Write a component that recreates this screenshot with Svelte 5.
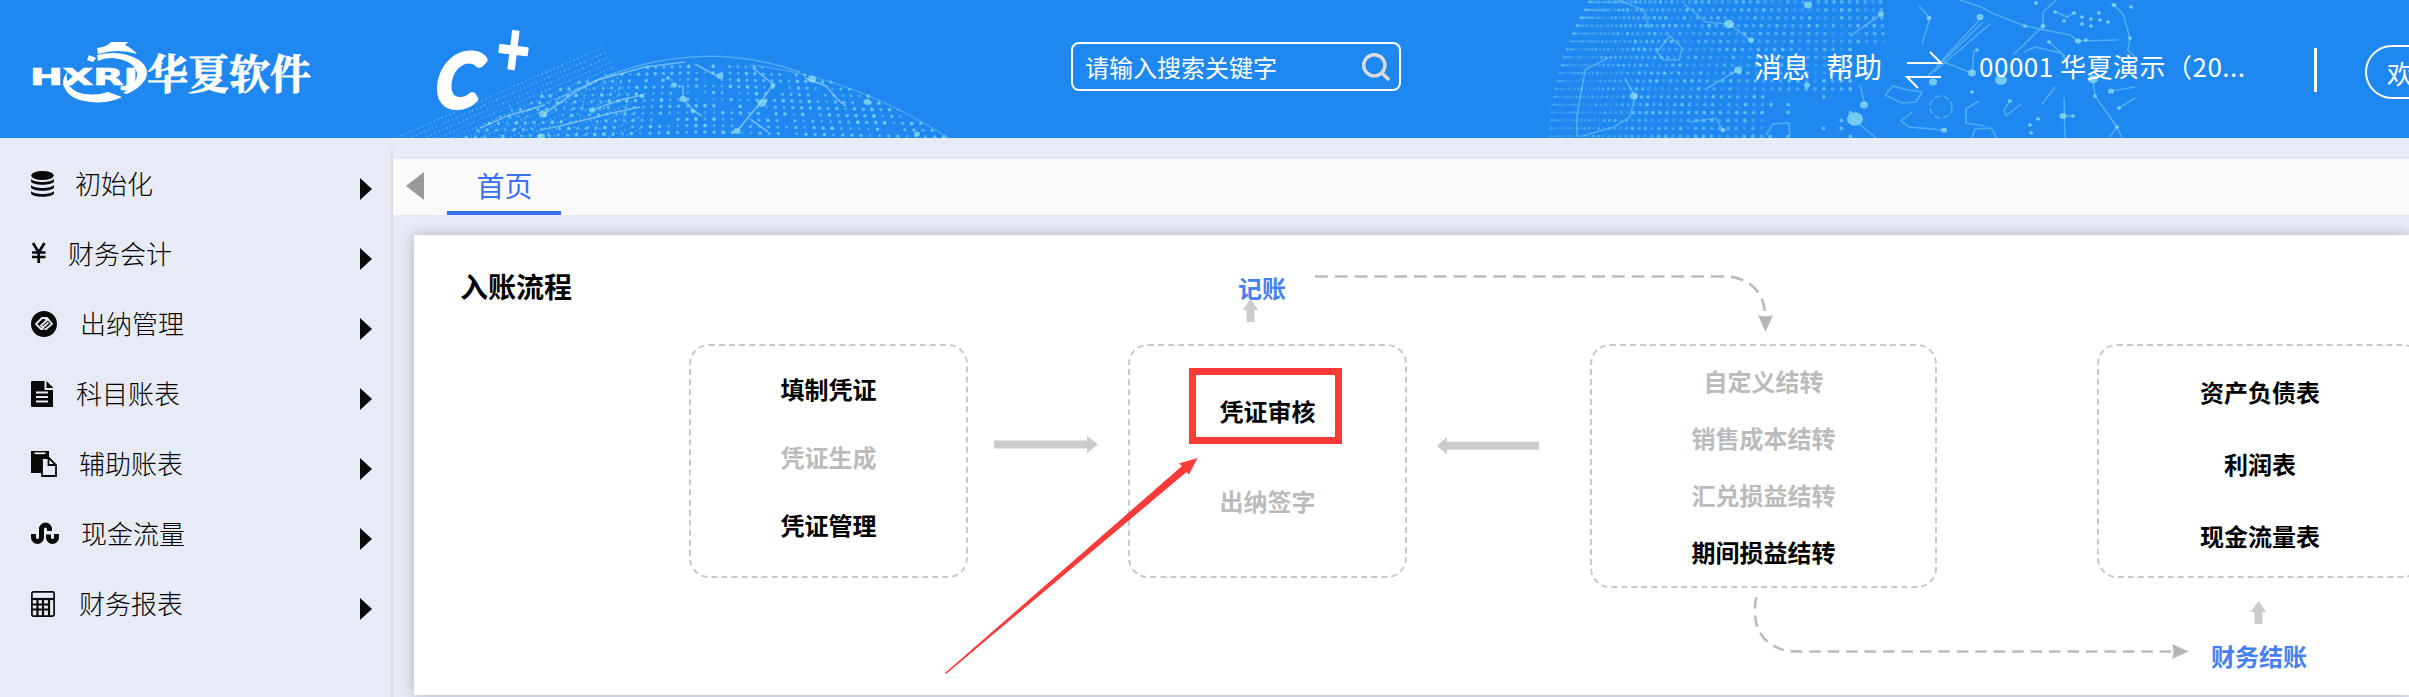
<script lang="ts">
  let keyword = $state("");
  let activeMenu = $state("");

  const menus = [
    { icon: "database", label: "初始化", width: 23, gap: 21 },
    { icon: "yen", label: "财务会计", width: 16, gap: 21 },
    { icon: "cashier", label: "出纳管理", width: 26, gap: 23 },
    { icon: "file", label: "科目账表", width: 23, gap: 22 },
    { icon: "paste", label: "辅助账表", width: 26, gap: 22 },
    { icon: "flow", label: "现金流量", width: 28, gap: 22 },
    { icon: "calc", label: "财务报表", width: 24, gap: 24 },
  ];

  // positions are relative to the flow panel
  const groups = [
    {
      x: 275, y: 109, w: 279, h: 234, pad: 9, line: 68,
      items: [["填制凭证", true], ["凭证生成", false], ["凭证管理", true]],
    },
    {
      x: 714, y: 109, w: 279, h: 234, pad: 20, line: 90,
      items: [["凭证审核", true], ["出纳签字", false]],
    },
    {
      x: 1176, y: 109, w: 347, h: 244, pad: 6, line: 57,
      items: [["自定义结转", false], ["销售成本结转", false], ["汇兑损益结转", false], ["期间损益结转", true]],
    },
    {
      x: 1683, y: 109, w: 326, h: 234, pad: 10, line: 72,
      items: [["资产负债表", true], ["利润表", true], ["现金流量表", true]],
    },
  ];

  function noise(a: number, b: number) {
    const n = Math.sin(a * 12.9898 + b * 78.233) * 43758.5453;
    return n - Math.floor(n);
  }

  type Dot = { x: number; y: number; r: number; o: number };

  function leftGlobe() {
    const dots: Dot[] = [];
    for (let c = -34; c <= 34; c++) {
      for (let row = 0; row < 12; row++) {
        const y = 66 + row * 6.6 + Math.abs(c) * 0.2;
        const x = 705 + c * 8.2 * (1 + row * 0.012);
        const dx = x - 705;
        const dy = y - 486;
        if (dx * dx + dy * dy > 423 * 423 || y > 138) continue;
        const n = noise(c, row);
        if (n < 0.1) continue;
        dots.push({ x, y, r: 1.2 + n * 0.7, o: 0.3 + n * 0.45 });
      }
    }
    // faint outer haze rising to the right
    for (let i = 0; i < 52; i++) {
      for (let j = 0; j < 17; j++) {
        const x = 398 + i * 4 + j * 2.6;
        const y = 137 - i * 1.75 + j * 5;
        if (y > 138 || x > 640 || y < 44) continue;
        dots.push({ x, y, r: 1.2, o: 0.12 + noise(i, j) * 0.25 });
      }
    }
    return dots;
  }

  function rightGlobe() {
    const dots: Dot[] = [];
    for (let row = 0; row < 18; row++) {
      const y = 2 + row * 7.9;
      const R = Math.sqrt(295 * 295 - (y - 150) * (y - 150));
      for (let a = -88; a < 9; a += 1.75) {
        const x = 1844 + R * Math.sin((a * Math.PI) / 180);
        const n = noise(a, row);
        if (x > 1768 && y > 92 && n < 0.9) continue;
        if (x > 1855 && y > 42) continue;
        const edge = Math.min(1, (x - 1548) / 90);
        dots.push({ x, y, r: 1.1 + edge * 0.8, o: (0.16 + n * 0.45) * (0.4 + edge * 0.6) });
      }
    }
    return dots;
  }

  const globeDots = [...leftGlobe(), ...rightGlobe()];

  const leftLinks = [
    "544 114 575 92 598 80 645 67 685 62",
    "695 64 717 76",
    "773 84 761 102 737 131",
    "753 68 773 84",
    "683 85 683 99 694 111 702 116",
    "643 95 620 100 592 110",
    "805 78 826 86 838 100 846 106",
    "540 130 560 126 612 113 640 107",
    "480 128 510 115 545 105",
    "750 119 768 132",
  ];
  const rightLinks = [
    "1684 4 1706 22 1729 24 1751 40",
    "1618 0 1644 10 1649 28",
    "1738 70 1706 89",
    "1625 78 1635 96 1630 117 1614 127 1582 136",
    "1657 52 1670 36 1682 48 1679 60 1664 60 1657 52",
    "1577 137 1577 115 1585 70 1608 58",
    "1766 135 1773 124 1789 123 1790 137",
    "1690 122 1716 118 1723 130",
    "1855 120 1876 138",
    "1860 85 1865 105",
    "1885 95 1893 86 1908 90 1922 92 1916 102 1902 103 1885 95",
    "1912 112 1901 121 1909 127 1943 130",
    "1850 36 1882 14",
    "1919 6 1930 18 1922 44",
    "1937 66 1981 18",
    "1934 72 1990 24",
    "1928 76 1983 22",
    "1974 50 1972 73 1944 62",
    "1960 0 1981 7 1992 13 2025 26 2070 35 2078 41 2118 40",
    "2056 0 2043 12 2043 26 2013 55",
    "2056 12 2067 17 2074 13",
    "2113 4 2123 14 2130 38 2128 50 2136 58",
    "2024 52 2035 47 2061 53 2066 60",
    "2049 42 2065 56",
    "2093 80 2095 96 2117 127 2122 138",
    "2117 127 2110 137",
    "2111 91 2135 87",
    "2119 108 2135 98",
    "2055 87 2042 104",
    "2064 98 2065 138",
    "2063 116 2073 116",
    "2010 101 2004 110 2006 116 2021 104",
    "1979 101 1966 109 1966 123 1985 126",
    "1972 138 1975 129 1991 128 1997 138",
  ];
  const nodes = [
    [1729, 24, 5], [1808, 5, 4], [1634, 96, 4], [1738, 70, 4], [1855, 119, 8], [1864, 105, 4],
    [1751, 40, 3], [1881, 14, 3], [1929, 18, 2.5], [1980, 17, 3.5], [1972, 73, 4], [1933, 82, 4],
    [2001, 80, 6], [2093, 79, 5], [2078, 41, 3], [2111, 91, 3], [2063, 116, 3.5], [2043, 26, 2.5],
    [2114, 5, 2.5], [1944, 130, 3], [1807, 85, 3], [1723, 130, 2.5], [2119, 108, 2], [2086, 40, 2],
    [2025, 26, 2], [2049, 42, 2], [2095, 96, 2], [2117, 127, 2], [2130, 38, 2], [1977, 50, 2],
    [2036, 3, 2], [2055, 12, 2], [2074, 13, 2], [2064, 21, 2], [2082, 17, 2], [2082, 24, 2],
    [2091, 19, 2], [2091, 26, 2], [2099, 13, 2], [2100, 20, 2], [2108, 22, 2], [2131, 7, 2],
    [1972, 92, 2], [2038, 119, 2], [2030, 125, 2], [2031, 133, 2], [2073, 116, 2], [2010, 101, 2],
    [543, 114, 4], [683, 99, 3.5], [720, 76, 3.5], [762, 103, 4.5], [737, 131, 3.5], [773, 85, 2.5],
    [674, 85, 3], [642, 96, 2.5], [592, 110, 3], [812, 79, 4], [867, 102, 3.5], [693, 111, 2.5],
    [541, 137, 4], [917, 134, 3], [668, 78, 2],
  ];
</script>

{#snippet menuIcon(name: string)}
  {#if name === "database"}
    <svg class="icon" width="23" height="26" viewBox="0 0 23 26">
      <ellipse cx="11.5" cy="4.5" rx="11.3" ry="4.5" />
      <path d="M0 8c3 4 20 4 23 0v2c0 5-23 5-23 0zM0 14c3 4 20 4 23 0v2c0 5-23 5-23 0zM0 20c3 4 20 4 23 0v2c0 5-23 5-23 0z" />
    </svg>
  {:else if name === "yen"}
    <svg class="icon line" width="16" height="26" viewBox="0 0 16 26">
      <path d="M2 2l5.7 9.5L13.500 2M7.700 11.500V22M1 11.500h13.500M1 16h13.500" stroke-width="2.700" />
    </svg>
  {:else if name === "cashier"}
    <svg class="icon" width="26" height="26" viewBox="0 0 26 26">
      <circle cx="13" cy="13" r="13" />
      <path class="cut" d="M12.500 18H10l-5-5 6-6h2.500l2.500 2-6 5.500 2 2 5.500-5M13.500 18H15l6-5-5-6h-2" />
    </svg>
  {:else if name === "file"}
    <svg class="icon" width="23" height="26" viewBox="0 0 23 26">
      <path d="M1 0h12.500v9H22v17H1a1 1 0 0 1-1-1V1a1 1 0 0 1 1-1zM15.500 0L22.500 7h-7z" />
      <path class="cut" d="M5 11.500h12M5 16h12M5 20.500h12" />
    </svg>
  {:else if name === "paste"}
    <svg class="icon" width="26" height="26" viewBox="0 0 26 26">
      <path d="M0 0h18v6h-7v16H0z" />
      <path class="cut" d="M3.500 2.300h11" />
      <path class="outline" d="M11 7h7l7 7v11H11zM17.500 7v7H25" />
    </svg>
  {:else if name === "flow"}
    <svg class="icon line" width="28" height="26" viewBox="0 0 28 26">
      <path d="M2.500 13v3.500a4 4 0 0 0 8 0V8a4 4 0 0 1 8 0v2M17.500 13.500v3a4 4 0 0 0 8 0V13" stroke-width="5" />
    </svg>
  {:else}
    <svg class="icon line" width="24" height="26" viewBox="0 0 24 26">
      <rect x="0.900" y="0.900" width="22.200" height="24.200" rx="1.500" stroke-width="1.700" />
      <path d="M1 8h22" stroke-width="2.200" />
      <path d="M1 13.500h17M1 18.500h17M6.500 8v17M12 8v17M18 8v17" stroke-width="2.200" />
    </svg>
  {/if}
{/snippet}

<div class="page">
  <header class="header">
    <svg class="backdrop" width="2409" height="138" viewBox="0 0 2409 138">
      {#each globeDots as d}
        <circle cx={d.x} cy={d.y} r={d.r} opacity={d.o} />
      {/each}
      <path class="arc" d="M556 100Q680 30 800 72" />
      <path class="arc faint" d="M750 65Q850 75 949 138" />
      <g class="links left">
        {#each leftLinks as points}
          <polyline {points} />
        {/each}
      </g>
      <g class="links">
        {#each rightLinks as points}
          <polyline {points} />
        {/each}
        <circle class="ring" cx="1941" cy="107" r="11" />
      </g>
      {#each nodes as [x, y, r]}
        <ellipse cx={x} cy={y} rx={r} ry={r * 0.85} opacity="0.75" />
      {/each}
    </svg>

    <svg class="logo" width="284" height="62" viewBox="30 41 284 62">
      <path d="M97 48Q107 47 111 42h17l-3 3q8 4 12 9Q118 48 98 54z" />
      <path d="M97 55q24-6 42 5 12 9 6 20-6 9-18 14l-4-1q15-10 14-20-3-13-25-15-8 0-14 3z" />
      <path d="M86 62q-14 4-19 12-2 12 10 18 14 5 31 0l14 5q-13 7-32 5Q65 99 63 82q1-13 23-20z" />
      <path d="M89 55l7 3-3 4-6-2z" />
      <text class="logo-mark" transform="translate(30 85) scale(1 0.9)" textLength="108" lengthAdjust="spacingAndGlyphs">HXRJ</text>
      <text class="logo-name" x="147" y="89" textLength="164">华夏软件</text>
    </svg>
    <svg class="edition" width="110" height="96" viewBox="430 20 110 96">
      <text class="edition-c" transform="translate(434 107) skewX(-7) scale(0.96 1)">C</text>
      <text class="edition-plus" transform="translate(494 73) rotate(7) scale(0.84 1.1)">+</text>
    </svg>

    <div class="search">
      <input type="text" bind:value={keyword} placeholder="请输入搜索关键字" />
      <svg width="28" height="28" viewBox="0 0 28 28">
        <circle cx="12.300" cy="12.300" r="10.600" />
        <path d="M20 20l6 6" />
      </svg>
    </div>

    <nav class="tools">
      <span>消息</span>
      <span>帮助</span>
      <svg width="38" height="40" viewBox="0 0 38 40">
        <path d="M2 13h34L25 2M36 27H2l11 11" />
      </svg>
      <span class="company">00001 华夏演示（20...</span>
      <i class="divider"></i>
      <span class="welcome">欢迎</span>
    </nav>
  </header>

  <div class="body">
    <aside class="sidebar">
      {#each menus as menu (menu.label)}
        <button
          class="menu"
          class:active={activeMenu === menu.label}
          onclick={() => (activeMenu = menu.label)}
        >
          {@render menuIcon(menu.icon)}
          <span class="label" style:margin-left="{menu.gap}px">{menu.label}</span>
          <i class="caret"></i>
        </button>
      {/each}
    </aside>

    <main class="content">
      <div class="tabs">
        <i class="prev"></i>
        <span class="tab">首页</span>
      </div>

      <section class="panel">
        <h2>入账流程</h2>

        {#each groups as g}
          <div
            class="group"
            style:left="{g.x}px"
            style:top="{g.y}px"
            style:width="{g.w}px"
            style:height="{g.h}px"
            style:padding-top="{g.pad}px"
            style:line-height="{g.line}px"
          >
            {#each g.items as [label, enabled]}
              <span class:disabled={!enabled}>{label}</span>
            {/each}
          </div>
        {/each}

        <svg class="wires" width="1995" height="460" viewBox="414 235 1995 460">
          <g class="solid">
            <path d="M994 440.500h93V436l11 8.500-11 8.500v-4.500h-93z" />
            <path d="M1539 441.700h-92V437l-10 8.700 10 8.700v-4.700h92z" />
            <path d="M1246.500 322v-12h-4l8-11 8 11h-4v12z" />
            <path d="M2254.500 624v-12h-4l8-11 8 11h-4v12z" />
          </g>
          <path class="dashed" d="M1315 276.500h409C1748 276.500 1765 291 1765 316" stroke-dasharray="12.800 7" />
          <path class="head" d="M1758 315q7 3 15 0l-7.500 17z" />
          <path class="dashed" d="M1756.500 597C1750 625 1762 651.500 1798 651.500H2172" stroke-dasharray="11.500 6.950" />
          <path class="head" d="M2172 644q3 7.500 0 15l16.500-7.500z" />
        </svg>

        <a class="link post" href="#post">记账</a>
        <a class="link close" href="#close">财务结账</a>

        <svg class="marker" width="1995" height="460" viewBox="414 235 1995 460">
          <rect x="1192.500" y="371.500" width="146" height="69" />
          <path d="M945 673L1182 466 1179 463.500 1197.500 458 1189 474.500 1186.500 472 946 674z" />
        </svg>
      </section>
    </main>
  </div>
</div>

<style>
  :global(body) {
    margin: 0;
    overflow: hidden;
  }

  .page {
    width: 2409px;
    height: 697px;
    overflow: hidden;
    background: #e7ebf6;
    color: #0a0a0a;
    font-family: "Noto Sans CJK SC", sans-serif;
  }

  .header {
    position: relative;
    display: flex;
    height: 138px;
    background: #1f87f0;
    color: #fff;
    overflow: hidden;
  }

  .backdrop {
    position: absolute;
    inset: 0;
    fill: #8fe0ee;
  }

  .arc {
    fill: none;
    stroke: #7cc8f5;
    stroke-width: 1.5;
    opacity: 0.55;
  }

  .faint {
    opacity: 0.4;
  }

  .links {
    fill: none;
    stroke: #6fc6f2;
    stroke-width: 1.6;
    opacity: 0.6;
  }

  .links.left {
    stroke: #a5e0f5;
  }

  .ring {
    stroke-dasharray: 6 3;
  }

  .logo,
  .edition,
  .search,
  .tools {
    position: relative;
    flex-shrink: 0;
  }

  .logo {
    margin: 41px 0 0 30px;
    fill: #fff;
  }

  .logo-mark {
    font: bold 25px "DejaVu Sans", sans-serif;
    stroke: #fff;
    stroke-width: 0.8;
  }

  .logo-name {
    font: bold 41px "Noto Serif CJK SC", "Noto Sans CJK SC", serif;
    stroke: #fff;
    stroke-width: 0.8;
  }

  .edition {
    margin: 20px 0 0 116px;
    fill: #fff;
    overflow: visible;
  }

  .edition-c {
    font: italic bold 74px Lato, sans-serif;
    stroke: #fff;
    stroke-width: 5;
    stroke-linejoin: round;
  }

  .edition-plus {
    font: bold 68px Lato, sans-serif;
    stroke: #fff;
    stroke-width: 2;
    stroke-linejoin: round;
  }

  .search {
    display: flex;
    align-items: center;
    box-sizing: border-box;
    width: 330px;
    height: 49px;
    margin: 42px 0 0 531px;
    padding: 0 9px 0 12px;
    border: 2px solid #fff;
    border-radius: 8px;
  }

  .search input {
    flex: 1;
    min-width: 0;
    padding: 0;
    border: 0;
    outline: 0;
    background: none;
    color: #fff;
    font: 24px "Noto Sans CJK SC", sans-serif;
  }

  .search input::placeholder {
    color: #fff;
    opacity: 1;
  }

  .search svg {
    fill: none;
    stroke: #dcdcdc;
    stroke-width: 3.4;
    stroke-linecap: round;
  }

  .tools {
    display: flex;
    align-items: flex-start;
    margin-left: 353px;
    padding-top: 45px;
    font-size: 28px;
    line-height: 42px;
    white-space: nowrap;
  }

  .tools span + span {
    margin-left: 16px;
  }

  .tools svg {
    margin: 5px 0 0 23px;
    fill: none;
    stroke: #fff;
    stroke-width: 2;
  }

  .tools .company {
    width: 268px;
    margin-left: 36px;
    font-size: 26px;
    letter-spacing: 0.5px;
  }

  .divider {
    width: 3px;
    height: 44px;
    margin: 3px 0 0 67px;
    background: #fff;
  }

  .tools .welcome {
    box-sizing: border-box;
    width: 180px;
    height: 54px;
    margin-left: 48px;
    padding-left: 20px;
    border: 2px solid #fff;
    border-radius: 27px;
    font-size: 26px;
    line-height: 51px;
  }

  .body {
    display: flex;
    height: 559px;
  }

  .sidebar {
    box-sizing: border-box;
    width: 393px;
    margin-top: 11px;
    border-right: 2px solid #ddd;
  }

  .menu {
    display: flex;
    align-items: center;
    width: 391px;
    height: 70px;
    padding: 0 19px 0 31px;
    border: 0;
    background: none;
    color: #000;
    font: 300 26px "Noto Sans CJK SC", sans-serif;
    cursor: pointer;
  }

  .label {
    margin-top: -3px;
  }

  .icon {
    flex-shrink: 0;
    fill: #0a0a0a;
  }

  .icon.line {
    fill: none;
    stroke: #0a0a0a;
  }

  .cut {
    fill: none;
    stroke: #e7ebf6;
    stroke-width: 1.8;
  }

  .outline {
    fill: #e7ebf6;
    stroke: #0a0a0a;
    stroke-width: 1.8;
  }

  .caret {
    margin: 10px 0 0 auto;
    border: 11px solid transparent;
    border-right: 0;
    border-left: 12px solid #0a0a0a;
  }

  .content {
    flex: 1;
    min-width: 0;
    padding-top: 21px;
  }

  .tabs {
    display: flex;
    align-items: center;
    height: 56px;
    background: #fafafa;
  }

  .prev {
    margin: -3px 0 0 13px;
    border: 14px solid transparent;
    border-left: 0;
    border-right: 18px solid #999;
  }

  .tab {
    box-sizing: border-box;
    width: 114px;
    height: 56px;
    margin-left: 23px;
    padding-left: 1px;
    border-bottom: 4px solid #3a6fee;
    color: #3a6fee;
    font-size: 28px;
    line-height: 53px;
    text-align: center;
  }

  .panel {
    position: relative;
    height: 460px;
    margin: 20px 0 0 21px;
    background: #fff;
    box-shadow: 0 0 14px rgba(0, 0, 0, 0.25);
  }

  h2 {
    margin: 0;
    padding: 30px 0 0 46px;
    color: #000;
    font-size: 28px;
    line-height: 42px;
  }

  .group {
    position: absolute;
    display: flex;
    flex-direction: column;
    align-items: center;
    box-sizing: border-box;
    border: 2px dashed #ccc8ca;
    border-radius: 20px;
    color: #000;
    font-size: 24px;
    font-weight: bold;
  }

  .disabled {
    color: #bbb;
  }

  .wires,
  .marker {
    position: absolute;
    top: 0;
    left: 0;
  }

  .solid {
    fill: #ccc;
  }

  .dashed {
    fill: none;
    stroke: #bbb;
    stroke-width: 2.6;
  }

  .head {
    fill: #b5b5b5;
  }

  .link {
    position: absolute;
    color: #4680f0;
    font-size: 24px;
    font-weight: bold;
    line-height: 36px;
    text-decoration: none;
  }

  .post {
    left: 824px;
    top: 35px;
  }

  .close {
    left: 1797px;
    top: 403px;
  }

  .marker {
    fill: #fb3a3a;
    pointer-events: none;
  }

  .marker rect {
    fill: none;
    stroke: #fb3a3a;
    stroke-width: 7;
  }
</style>
